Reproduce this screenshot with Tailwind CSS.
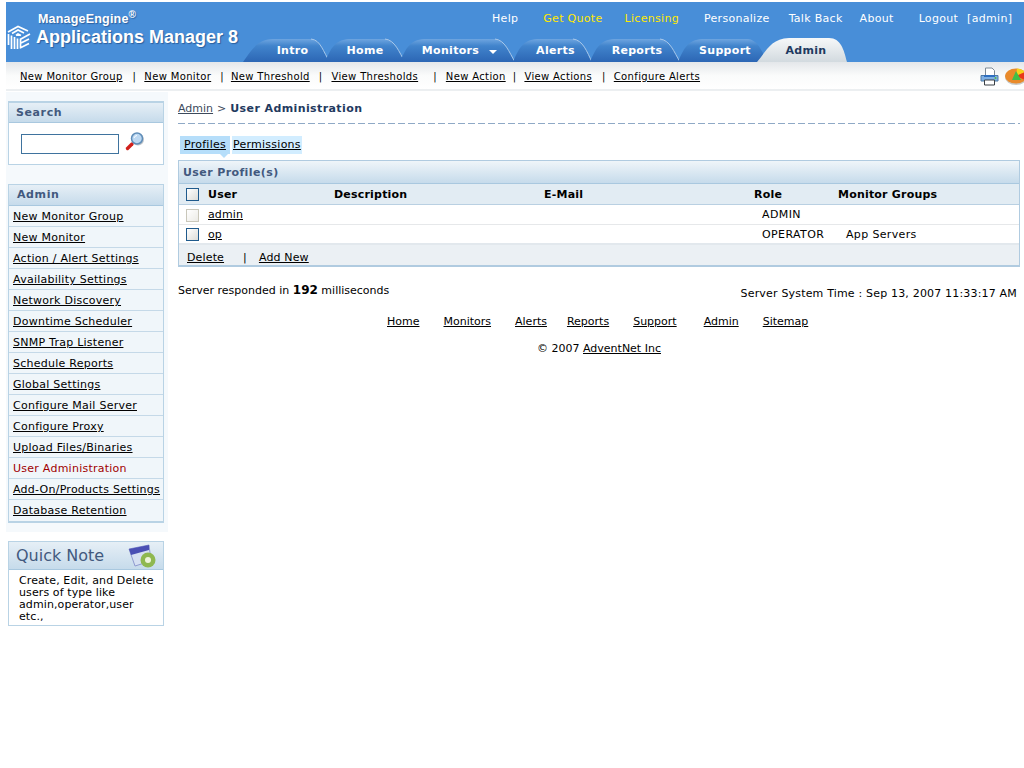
<!DOCTYPE html>
<html lang="en">
<head>
    <meta charset="UTF-8">
    <meta name="viewport" content="width=device-width, initial-scale=1.0">
    <script src="https://cdn.jsdelivr.net/npm/@tailwindcss/browser@4"></script>
    <title>Applications Manager - User Administration</title>
</head>
<body class="min-h-screen overflow-hidden bg-white font-['DejaVu_Sans',sans-serif] text-[11px] leading-[14px] text-black">
    <!-- HEADER -->
    <header class="ml-[6px] mt-[2px] h-[60px] bg-[#488ed8] relative overflow-hidden">
        <div class="flex">
            <!-- LOGO -->
            <div class="flex w-[240px] shrink-0 pt-[10px] pl-[1px]">
                <svg class="mt-[12px] w-[24px] h-[25px] shrink-0" viewBox="0 0 24 25" fill="none" stroke="#fff" stroke-width="1.7">
                    <path d="M1 8 L11 2.5 L21 7 M5 9.5 L11 6 L17 9 M9 11.5 L11 10 L14 11.5"/>
                    <path d="M1.5 10 V21 M4.5 11.5 V25 M7.5 13 V25 M10.5 14.5 V25"/>
                    <path d="M13.5 15 V24.5 M13 15.5 L23 10 M13 19.5 L22 15 M13 24 L22 19.5"/>
                </svg>
                <div class="ml-[5px] font-['Liberation_Sans',sans-serif] font-bold text-white [text-shadow:1px_1px_1px_#2b5f9e]">
                    <div class="text-[12.5px] leading-[15px] pl-[2px] tracking-[0.2px]">ManageEngine<sup class="text-[10px] leading-none">®</sup></div>
                    <div class="text-[18px] leading-[21px] whitespace-nowrap">Applications Manager 8</div>
                </div>
            </div>
            <!-- TOP LINKS -->
            <nav class="flex pt-[9px] mt-[1px] text-white whitespace-nowrap tracking-[0.3px]">
                <a class="ml-[246px]">Help</a>
                <a class="ml-[25px] text-[#ffe800]">Get Quote</a>
                <a class="ml-[22px] text-[#ffe800]">Licensing</a>
                <a class="ml-[25px]">Personalize</a>
                <a class="ml-[19px]">Talk Back</a>
                <a class="ml-[17px]">About</a>
                <a class="ml-[25px]">Logout</a>
                <a class="ml-[9px]">[admin]</a>
            </nav>
        </div>
        <!-- TABS -->
        <div class="absolute left-[237px] top-[36px] h-[24px] flex font-bold text-white tracking-[0.3px]">
            <div class="relative w-[87px] flex justify-center pt-[6px] pl-[12px]">
                <svg class="absolute inset-0 w-full h-full" viewBox="0 0 87 24" preserveAspectRatio="none"><defs><linearGradient id="t" x1="0" y1="0" x2="0" y2="1"><stop offset="0" stop-color="#6ea5e0"/><stop offset="0.3" stop-color="#4184cc"/><stop offset="1" stop-color="#2c66b4"/></linearGradient></defs><path d="M0 24 C10 10 14 2 30 1 H68 C78 2 80 14 87 24 Z" fill="url(#t)"/><path d="M68 1 C78 2 80 14 87 24" fill="none" stroke="#a8c8ea"/></svg>
                <span class="relative">Intro</span>
            </div>
            <div class="relative w-[80px] -ml-[5px] flex justify-center pt-[6px]">
                <svg class="absolute inset-0 w-full h-full" viewBox="0 0 80 24" preserveAspectRatio="none"><path d="M0 24 C6 10 10 2 24 1 H60 C70 2 74 14 80 24 Z" fill="url(#t)"/><path d="M60 1 C70 2 74 14 80 24" fill="none" stroke="#a8c8ea"/></svg>
                <span class="relative">Home</span>
            </div>
            <div class="relative w-[115px] -ml-[5px] flex justify-center pt-[6px] pr-[14px]">
                <svg class="absolute inset-0 w-full h-full" viewBox="0 0 115 24" preserveAspectRatio="none"><path d="M0 24 C6 10 10 2 24 1 H95 C105 2 109 14 115 24 Z" fill="url(#t)"/><path d="M95 1 C105 2 109 14 115 24" fill="none" stroke="#a8c8ea"/></svg>
                <span class="relative">Monitors</span>
                <svg class="absolute left-[89px] top-[12px] w-[8px] h-[4px]" viewBox="0 0 8 4"><path d="M0 0 H8 L4 4 Z" fill="#fff"/></svg>
            </div>
            <div class="relative w-[79px] -ml-[2px] flex justify-center pt-[6px] pl-[6px]">
                <svg class="absolute inset-0 w-full h-full" viewBox="0 0 79 24" preserveAspectRatio="none"><path d="M0 24 C6 10 10 2 24 1 H60 C70 2 74 14 79 24 Z" fill="url(#t)"/><path d="M60 1 C70 2 74 14 79 24" fill="none" stroke="#a8c8ea"/></svg>
                <span class="relative">Alerts</span>
            </div>
            <div class="relative w-[90px] -ml-[2px] flex justify-center pt-[6px] pl-[4px]">
                <svg class="absolute inset-0 w-full h-full" viewBox="0 0 90 24" preserveAspectRatio="none"><path d="M0 24 C6 10 10 2 24 1 H70 C80 2 84 14 90 24 Z" fill="url(#t)"/><path d="M70 1 C80 2 84 14 90 24" fill="none" stroke="#a8c8ea"/></svg>
                <span class="relative">Reports</span>
            </div>
            <div class="relative w-[90px] -ml-[2px] flex justify-center pt-[6px] pl-[4px]">
                <svg class="absolute inset-0 w-full h-full" viewBox="0 0 90 24" preserveAspectRatio="none"><path d="M0 24 C6 10 10 2 24 1 H70 C80 2 84 14 90 24 Z" fill="url(#t)"/></svg>
                <span class="relative">Support</span>
            </div>
            <div class="relative w-[90px] -ml-[11px] flex justify-center pt-[6px] pl-[8px] text-[#1f3a60]">
                <svg class="absolute inset-0 w-full h-full" viewBox="0 0 90 24" preserveAspectRatio="none"><defs><linearGradient id="a" x1="0" y1="0" x2="0" y2="1"><stop offset="0" stop-color="#f6f8f9"/><stop offset="1" stop-color="#d2dadf"/></linearGradient></defs><path d="M0 24 C10 12 14 1 32 0 H72 C84 0 87 12 90 24 Z" fill="url(#a)"/></svg>
                <span class="relative">Admin</span>
            </div>
        </div>
    </header>

    <!-- SUB NAV -->
    <div class="ml-[6px] h-[29px] flex items-center justify-between bg-gradient-to-b from-[#e4e7ea] via-[#fafbfb] to-white border-b-2 border-[#eceff1] overflow-hidden">
        <nav class="flex pl-[14px] pt-[3px] whitespace-nowrap text-[10px] tracking-[0.35px]">
            <a class="underline">New Monitor Group</a><span class="ml-[10px]">|</span>
            <a class="underline ml-[8px]">New Monitor</a><span class="ml-[9px]">|</span>
            <a class="underline ml-[7px]">New Threshold</a><span class="ml-[9px]">|</span>
            <a class="underline ml-[9px]">View Thresholds</a><span class="ml-[15px]">|</span>
            <a class="underline ml-[9px]">New Action</a><span class="ml-[7px]">|</span>
            <a class="underline ml-[8px]">View Actions</a><span class="ml-[10px]">|</span>
            <a class="underline ml-[8px]">Configure Alerts</a>
        </nav>
        <div class="flex items-center gap-[6px] -mr-[1px] w-[45px] pt-[1px] shrink-0 overflow-hidden">
            <svg class="w-[19px] h-[19px] shrink-0" viewBox="0 0 19 19">
                <path d="M5.5 1 H12 L14.5 3.5 V9 H5.5 Z" fill="#fff" stroke="#7d8a96"/>
                <path d="M1 8.5 H18 V14 H1 Z" fill="#7fb0e4" stroke="#4f7aa6"/>
                <path d="M4 8 H15 V10 H4 Z" fill="#2f6fc0"/>
                <path d="M4.5 13 H14.5 V18 H4.5 Z" fill="#fff" stroke="#3a4046"/>
                <circle cx="15.5" cy="11" r="1" fill="#58b848"/>
            </svg>
            <svg class="w-[20px] h-[17px] shrink-0" viewBox="0 0 20 17">
                <ellipse cx="11" cy="9" rx="11" ry="8" fill="#c8c8c4"/>
                <ellipse cx="11" cy="8" rx="11" ry="7.5" fill="#e98a2a"/>
                <path d="M11 8 L12 0.5 A11 7.5 0 0 1 20 4 Z" fill="#f7d21c"/>
                <path d="M11 8 L20 4 V12 Z" fill="#e8371c"/>
                <path d="M11 3 L16 12 H7 Z" fill="#3fbf48"/>
            </svg>
        </div>
    </div>

    <div class="flex">
        <!-- SIDEBAR -->
        <aside class="ml-[6px] mt-[1px] w-[162px] shrink-0 h-[440px] bg-[#f5f9fc] px-[2px] pt-[9px]">
            <section class="w-[156px] border-2 border-[#b9d3e5] border-x-[1px] border-b-[1px] bg-white">
                <h3 class="h-[20px] bg-gradient-to-b from-[#e6eff6] to-[#c6dbeb] border-b border-[#a9c8df] pl-[7px] pt-[3px] font-bold text-[#42597e] tracking-[0.6px]">Search</h3>
                <div class="h-[41px] flex items-center pl-[12px]">
                    <input class="w-[98px] h-[20px] bg-white border border-[#3f739e]">
                    <svg class="ml-[6px] w-[20px] h-[19px] -mt-[5px]" viewBox="0 0 20 19">
                        <path d="M2.5 16.5 L7 12" stroke="#d0201c" stroke-width="3.4" stroke-linecap="round"/>
                        <circle cx="13" cy="7.5" r="6" fill="#7f8a94" opacity="0.5"/>
                        <circle cx="12" cy="6.5" r="5.5" fill="#bcd8f2" stroke="#5f8db8" stroke-width="1.5"/>
                        <path d="M9 6 A3.5 3.5 0 0 1 12 3.5" stroke="#fff" fill="none"/>
                    </svg>
                </div>
            </section>

            <section class="mt-[19px] w-[156px] border border-[#b9d3e5] border-b-2 bg-[#f0f6fa]">
                <h3 class="h-[21px] bg-gradient-to-b from-[#e6eff6] to-[#c6dbeb] border-b border-[#a9c8df] pl-[8px] pt-[3px] font-bold text-[#42597e] tracking-[0.6px]">Admin</h3>
                <ul class="whitespace-nowrap tracking-[0.25px] [&>li]:h-[21px] [&>li]:pl-[4px] [&>li]:pt-[4px] [&>li]:border-b [&>li]:border-[#c5d9e8] [&>li:last-child]:border-b-0 [&_a]:underline">
                    <li><a>New Monitor Group</a></li>
                    <li><a>New Monitor</a></li>
                    <li><a>Action / Alert Settings</a></li>
                    <li><a>Availability Settings</a></li>
                    <li><a>Network Discovery</a></li>
                    <li><a>Downtime Scheduler</a></li>
                    <li><a>SNMP Trap Listener</a></li>
                    <li><a>Schedule Reports</a></li>
                    <li><a>Global Settings</a></li>
                    <li><a>Configure Mail Server</a></li>
                    <li><a>Configure Proxy</a></li>
                    <li><a>Upload Files/Binaries</a></li>
                    <li class="text-[#a00000]">User Administration</li>
                    <li><a>Add-On/Products Settings</a></li>
                    <li><a>Database Retention</a></li>
                </ul>
            </section>

            <section class="mt-[18px] w-[156px] border border-[#b9d3e5] bg-white">
                <div class="h-[28px] bg-gradient-to-b from-[#e6eff6] to-[#c6dbeb] border-b border-[#a9c8df] pl-[7px] relative">
                    <h3 class="text-[16px] leading-[28px] text-[#42597e]">Quick Note</h3>
                    <svg class="absolute left-[119px] top-[2px] w-[30px] h-[24px]" viewBox="0 0 30 24">
                        <path d="M1 5 L21 1 L23 17 L7 22 Z" fill="#d6e0f2" stroke="#8f9ad0"/>
                        <path d="M1 5 L21 1 L21 6 L3 11 Z" fill="#4a4fb4"/>
                        <circle cx="20" cy="16" r="7.5" fill="#8fb850"/>
                        <circle cx="20" cy="16" r="3" fill="#eef4da"/>
                    </svg>
                </div>
                <p class="pl-[10px] pr-[4px] pt-[5px] pb-[2px] leading-[12px] h-[55px] tracking-[0.1px]">Create, Edit, and Delete users of type like admin,operator,user etc.,</p>
            </section>
        </aside>

        <!-- MAIN CONTENT -->
        <main class="ml-[10px] mt-[1px] w-[842px] shrink-0">
            <div class="pt-[10px] h-[31px] flex">
                <a class="underline text-[#3d4a5c]">Admin</a>
                <span class="ml-[4px] text-[#3d4a5c]">&gt;</span>
                <span class="ml-[4px] font-bold text-[#1f3a60] tracking-[0.4px]">User Administration</span>
            </div>
            <div class="h-[1px] bg-[repeating-linear-gradient(90deg,#8fa9c6_0_7px,transparent_7px_10px)]"></div>

            <div class="flex mt-[12px] ml-[2px] gap-[2px] tracking-[0.25px]">
                <a class="relative h-[18px] w-[50px] bg-[#b6defa] pl-[4px] pt-[2px] underline">Profiles
                    <span class="absolute left-[40px] top-[18px] border-x-[4px] border-x-transparent border-t-[4px] border-t-[#b6defa]"></span>
                </a>
                <a class="h-[18px] w-[70px] bg-[#d2edff] pl-[1px] pt-[2px] underline">Permissions</a>
            </div>

            <!-- PROFILES TABLE -->
            <section class="mt-[6px] border border-[#b0cbe0] border-b-2">
                <h3 class="h-[23px] bg-gradient-to-b from-[#eff5f9] to-[#c6dbeb] border-b border-[#a9c8df] pl-[4px] pt-[5px] font-bold text-[#42597e] tracking-[0.4px]">User Profile(s)</h3>
                <table class="w-full table-fixed border-collapse [&_td]:pt-[2px] [&_th]:pt-[2px]">
                    <colgroup>
                        <col class="w-[29px]"><col class="w-[126px]"><col class="w-[210px]"><col class="w-[210px]"><col class="w-[84px]"><col>
                    </colgroup>
                    <thead>
                        <tr class="h-[20px] bg-[#e2ecf3] border-b border-[#b9d0e2] text-left font-bold tracking-[0.2px]">
                            <th class="pl-[7px]"><span class="block w-[13px] h-[13px] border border-[#1f5a8c] bg-gradient-to-br from-white to-[#dcdcd8]"></span></th>
                            <th>User</th>
                            <th>Description</th>
                            <th>E-Mail</th>
                            <th>Role</th>
                            <th>Monitor Groups</th>
                        </tr>
                    </thead>
                    <tbody class="tracking-[0.1px]">
                        <tr class="h-[20px] border-b border-[#e6e8ea]">
                            <td class="pl-[7px]"><span class="block w-[13px] h-[13px] border border-[#c9c7ba] bg-gradient-to-br from-white to-[#ecebe6]"></span></td>
                            <td><a class="underline">admin</a></td>
                            <td></td>
                            <td></td>
                            <td class="pl-[8px] tracking-[0.4px]">ADMIN</td>
                            <td class="pl-[8px]"></td>
                        </tr>
                        <tr class="h-[20px] border-b-2 border-[#e2e8ed]">
                            <td class="pl-[7px]"><span class="block w-[13px] h-[13px] border border-[#1f5a8c] bg-gradient-to-br from-white to-[#dcdcd8]"></span></td>
                            <td><a class="underline">op</a></td>
                            <td></td>
                            <td></td>
                            <td class="pl-[8px] tracking-[0.4px]">OPERATOR</td>
                            <td class="pl-[8px] tracking-[0.35px]">App Servers</td>
                        </tr>
                    </tbody>
                </table>
                <div class="h-[20px] bg-[#ebf0f4] pl-[8px] pt-[6px] flex tracking-[0.15px]">
                    <a class="underline">Delete</a>
                    <span class="ml-[19px]">|</span>
                    <a class="underline ml-[12px]">Add New</a>
                </div>
            </section>

            <!-- SERVER INFO -->
            <div class="flex justify-between mt-[16px] pr-[3px]">
                <p>Server responded in <b class="text-[12px]">192</b> milliseconds</p>
                <p class="mt-[4px] tracking-[0.18px]">Server System Time : Sep 13, 2007 11:33:17 AM</p>
            </div>

            <!-- FOOTER -->
            <nav class="flex mt-[14px] pl-[209px] whitespace-nowrap [&>a]:underline">
                <a>Home</a>
                <a class="ml-[24px]">Monitors</a>
                <a class="ml-[24px]">Alerts</a>
                <a class="ml-[20px]">Reports</a>
                <a class="ml-[24px]">Support</a>
                <a class="ml-[27px]">Admin</a>
                <a class="ml-[24px]">Sitemap</a>
            </nav>
            <p class="mt-[13px] pl-[359px]">© 2007 <a class="underline">AdventNet Inc</a></p>
        </main>
    </div>
</body>
</html>
